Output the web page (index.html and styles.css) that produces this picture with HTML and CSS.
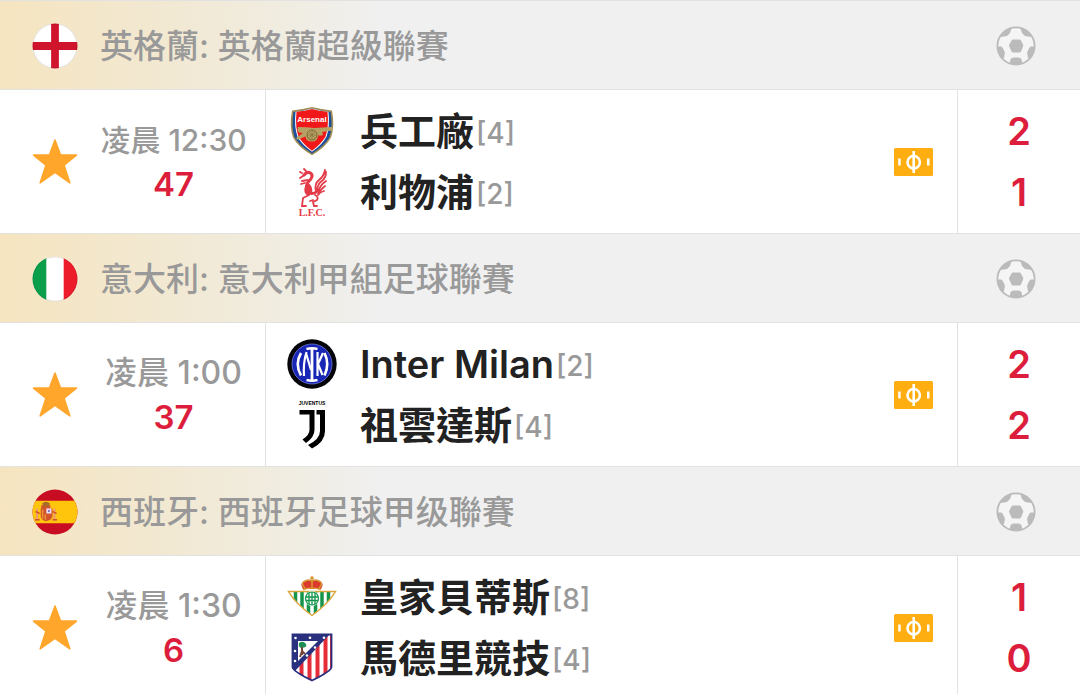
FILE: index.html
```
<!DOCTYPE html>
<html lang="zh-Hant">
<head>
  <meta charset="UTF-8">
  <meta name="viewport" content="width=device-width, initial-scale=1.0">
  <title>足球比分</title>
  <link rel="stylesheet" href="styles.css">
</head>
<body>

  <!-- Shared icons -->
  <svg class="sprite" aria-hidden="true">
    <defs>
      <clipPath id="round"><circle cx="22.5" cy="22.5" r="22"/></clipPath>
      <clipPath id="ball-clip"><circle cx="20" cy="20" r="19"/></clipPath>
      <symbol id="ball" viewBox="0 0 40 40">
        <circle cx="20" cy="20" r="18.6" fill="#f5f5f5"/>
        <g fill="#bbb" clip-path="url(#ball-clip)">
          <path d="M17 13.500h6.500q1 0 1.500 1l2 4q.5 1 0 2l-2 5q-.5 1-1.500 1H17q-1 0-1.500-1l-2.200-5q-.5-1 0-2l2.200-4q.5-1 1.500-1z"/>
          <path d="M3 10L12 0l4 1-2 6-3 3-6.500 1z"/>
          <path d="M37 10L28 0l-4 1 2 6 3 3 6.500 1z"/>
          <path d="M0 20.500h5q1 0 1.500 1l2 4q.5 1 .3 2L8 32l-4 2z"/>
          <path d="M40 20.500h-5q-1 0-1.500 1l-2 4q-.5 1-.3 2L32 32l4 2z"/>
          <path d="M13 40l1.500-6.500q1-2 3-2h5q2 0 3 2L27 40z"/>
        </g>
        <circle cx="20" cy="20" r="18.600" fill="none" stroke="#bbb" stroke-width="1.800"/>
      </symbol>
      <symbol id="star" viewBox="0 0 46 46">
        <path d="M23 1l5.600 14.900 15.900.2-12.400 10.100 5.800 17.700L23 33.500 8.100 43.900l5.800-17.700L1.500 16.100l15.900-.2z" fill="#ffa62b" stroke="#ffa62b" stroke-width="1.500" stroke-linejoin="round"/>
      </symbol>
      <symbol id="pitch" viewBox="0 0 39 28">
        <rect width="39" height="28" rx="1.500" fill="#ffae12"/>
        <rect x="4.200" y="10.500" width="2.500" height="7" fill="#fff"/>
        <rect x="33" y="10.500" width="2.500" height="7" fill="#fff"/>
        <circle cx="19.700" cy="14.200" r="6.200" fill="none" stroke="#fff" stroke-width="2.600"/>
        <path d="M19.700 3v22" stroke="#fff" stroke-width="2.600"/>
      </symbol>
    </defs>
  </svg>

  <section class="league">
    <header class="league-header">
      <svg class="flag" viewBox="0 0 45 45" role="img" aria-label="英格蘭">
        <g clip-path="url(#round)">
          <rect width="45" height="45" fill="#fff"/>
          <path d="M22.500 0v45M0 22.500h45" stroke="#d0142c" stroke-width="7.600"/>
        </g>
        <circle cx="22.500" cy="22.500" r="21.500" fill="none" stroke="#000" stroke-opacity=".1"/>
      </svg>
      <h2>英格蘭: 英格蘭超級聯賽</h2>
      <svg class="ball"><use href="#ball"/></svg>
    </header>
    <div class="match">
      <div class="status">
        <button class="star" aria-label="收藏"><svg><use href="#star"/></svg></button>
        <div class="clock">
          <span class="time time-long">凌晨 12:30</span>
          <span class="minute">47</span>
        </div>
      </div>
      <div class="teams">
        <div class="team-list">
          <div class="team">
            <svg class="crest" viewBox="0 0 50 50" role="img" aria-label="Arsenal">
              <path d="M5 4.500Q15 3.500 25 1q10 2.500 20 3.500 3 16-1 27Q39 41 25 49.300 11 41 6 31.500 2 20.500 5 4.500z" fill="#a08c55"/>
              <path d="M6.500 6Q16 5 25 2.600 34 5 43.500 6q2.500 15-1 25Q38 39.500 25 47.500 12 39.500 7.500 31 4 21 6.500 6z" fill="#1c4f9c"/>
              <path d="M8.500 5.800Q17 5 25 2.600 33 5 41.500 5.800q1.500 15-2 25Q35 39 25 45.800 15 39 10.500 30.800 7 20.800 8.500 5.800z" fill="#fff"/>
              <path d="M9.500 5.700Q18 5 25 3q7 2 15.500 2.700 1.500 15-2 25Q34 38 25 44.800 16 38 11.500 30.700 8 20.700 9.500 5.700z" fill="#f01818"/>
              <path d="M11 21q9 0 16 1l18-1v3.500L35 26q1.500 1.500.5 3.500H31q0 6-6 6t-6.500-5q-3 .5-7.500 3.500l-2-2 7-5q-5 0-5.500-2.500z" fill="#b7a265"/>
              <circle cx="25" cy="29" r="5" fill="none" stroke="#7d6431" stroke-width="1"/>
              <path d="M20 29h10M25 24v10M21.500 25.500l7 7M28.500 25.500l-7 7" stroke="#8b7340" stroke-width=".8"/>
              <text class="arsenal-text" x="25" y="16">Arsenal</text>
            </svg>
            <span class="name">兵工廠</span><span class="rank">[4]</span>
          </div>
          <div class="team">
            <svg class="crest" viewBox="0 0 50 50" role="img" aria-label="Liverpool">
              <g fill="none" stroke="#e43b48" stroke-linecap="round">
                <path d="M17 8q3-4 6.500-2 3 2.500 0 6.500-4.500 4-4 8t5 6q5 0 6-4" stroke-width="3"/>
                <path d="M22 18q3 3 2 8l-3 2q-4-3-2-9z" fill="#e43b48" stroke-width="2"/>
                <path d="M29 24q-2-7 3-11 5-4 6-10M30 24q0-7 6-11 3-3 3-8M31 25q2-7 8-11M31 27q3-5 7-8M31 28q2-3 6-4" stroke-width="1.800"/>
                <path d="M16 9l-3 2M15 6l-2-1M19 4l-2-2M15 14l6-1M14 17l4-1M28 28q4 2 2 5l-4 2 1 4h3M22 28l-6 3-1 8h4M26 33l-3 1" stroke-width="1.800"/>
              </g>
              <text class="lfc-text" x="25" y="49">L.F.C.</text>
            </svg>
            <span class="name">利物浦</span><span class="rank">[2]</span>
          </div>
        </div>
        <svg class="pitch"><use href="#pitch"/></svg>
      </div>
      <div class="scores">
        <span>2</span>
        <span>1</span>
      </div>
    </div>
  </section>

  <section class="league">
    <header class="league-header">
      <svg class="flag" viewBox="0 0 45 45" role="img" aria-label="意大利">
        <g clip-path="url(#round)">
          <rect width="45" height="45" fill="#fff"/>
          <rect width="14" height="45" fill="#0b9f4c"/>
          <rect x="31" width="14" height="45" fill="#ed1c2b"/>
        </g>
        <circle cx="22.500" cy="22.500" r="21.500" fill="none" stroke="#000" stroke-opacity=".1"/>
      </svg>
      <h2>意大利: 意大利甲組足球聯賽</h2>
      <svg class="ball"><use href="#ball"/></svg>
    </header>
    <div class="match">
      <div class="status">
        <button class="star" aria-label="收藏"><svg><use href="#star"/></svg></button>
        <div class="clock">
          <span class="time">凌晨 1:00</span>
          <span class="minute">37</span>
        </div>
      </div>
      <div class="teams">
        <div class="team-list">
          <div class="team">
            <svg class="crest" viewBox="0 0 50 50" role="img" aria-label="Inter Milan">
              <circle cx="25" cy="25" r="24.700" fill="#050509"/>
              <circle cx="25" cy="25" r="20" fill="#1726b4"/>
              <circle cx="25" cy="25" r="20" fill="none" stroke="#6d78d6" stroke-width=".8"/>
              <g fill="none" stroke="#fff">
                <path d="M25 10v31" stroke-width="2.800"/>
                <path d="M19.500 10q5.500-1.500 11 0M19.500 41q5.500 1.500 11 0" stroke-width="2.600"/>
                <path d="M19.500 13q-3.500 11-2.500 24M19 14l5 17M30.500 13v24M36 14l-5 11 4.500 11" stroke-width="2.200"/>
                <path d="M14 14q-6.500 11 0 22.500M37.500 14q5.500 11 0 22.500" stroke-width="2.600"/>
              </g>
            </svg>
            <span class="name">Inter Milan</span><span class="rank">[2]</span>
          </div>
          <div class="team">
            <svg class="crest" viewBox="0 0 50 50" role="img" aria-label="Juventus">
              <text class="juve-text" x="25" y="5">JUVENTUS</text>
              <path d="M12.500 10h15v20q0 7-8.500 13l-3.500-3.500q7-4.500 7-9.500V14.500h-10z"/>
              <path d="M29.500 10H38v21q0 11-13 17.500l-4-3.500q12-6 12-14V14.500h-3.500z"/>
            </svg>
            <span class="name">祖雲達斯</span><span class="rank">[4]</span>
          </div>
        </div>
        <svg class="pitch"><use href="#pitch"/></svg>
      </div>
      <div class="scores">
        <span>2</span>
        <span>2</span>
      </div>
    </div>
  </section>

  <section class="league">
    <header class="league-header">
      <svg class="flag" viewBox="0 0 45 45" role="img" aria-label="西班牙">
        <g clip-path="url(#round)">
          <rect width="45" height="45" fill="#c80d22"/>
          <rect y="11.500" width="45" height="22" fill="#ffc40c"/>
          <path d="M9 16h9v3h2v8q-1 4-6.500 4.500Q9 30.500 8.500 27v-8h.5z" fill="#d2542c"/>
          <path d="M10 14q3.500-3 7.500 0l-1 3h-5.500z" fill="#a86a2a"/>
          <path d="M5 19v12M22 19v12" stroke="#ef9a75" stroke-width="2"/>
          <path d="M3.500 22l4 2M20 22l4 2M3 30h4.500M20 30h4.500" stroke="#d2542c" stroke-width="1.500"/>
          <rect x="14" y="19" width="5" height="5" fill="#eadcf4"/>
          <circle cx="16.500" cy="21.500" r="1" fill="#7355b5"/>
          <path d="M10.500 20v9M13 25v5" stroke="#f5ac38" stroke-width="1"/>
        </g>
      </svg>
      <h2>西班牙: 西班牙足球甲级聯賽</h2>
      <svg class="ball"><use href="#ball"/></svg>
    </header>
    <div class="match">
      <div class="status">
        <button class="star" aria-label="收藏"><svg><use href="#star"/></svg></button>
        <div class="clock">
          <span class="time">凌晨 1:30</span>
          <span class="minute">6</span>
        </div>
      </div>
      <div class="teams">
        <div class="team-list">
          <div class="team">
            <svg class="crest" viewBox="0 0 50 50" role="img" aria-label="Real Betis">
              <clipPath id="betis"><path d="M1.500 19.500h47Q42 31 25 43.500 8 31 1.500 19.500z"/></clipPath>
              <g clip-path="url(#betis)">
                <rect width="50" height="50" fill="#fff"/>
                <path d="M8.500 18v26M15 18v26M21.500 18v26M28.500 18v26M35 18v26M41.500 18v26" stroke="#13964b" stroke-width="3.500"/>
              </g>
              <path d="M1.500 19.500h47Q42 31 25 43.500 8 31 1.500 19.500z" fill="none" stroke="#d9a53a" stroke-width="1.500"/>
              <circle cx="25" cy="26.500" r="7.500" fill="#fff"/>
              <path d="M22 21v11M25 20v13M28 21v11M19 25h12M19 28.500h12" stroke="#13964b" stroke-width="1.300"/>
              <circle cx="25" cy="26.500" r="6.500" fill="none" stroke="#13964b" stroke-width="1.200"/>
              <path d="M16 17q-4-6 2-8 3-1.500 7 0 4-1.500 7 0 6 2 2 8z" fill="#dc3a2c"/>
              <path d="M16 17.500q9-3 18 0M18 16q-5-5 0-7 4-2 7 0v7M32 16q5-5 0-7-4-2-7 0M25 9V4M23 6h4" fill="none" stroke="#d79a35" stroke-width="1.500"/>
            </svg>
            <span class="name">皇家貝蒂斯</span><span class="rank">[8]</span>
          </div>
          <div class="team">
            <svg class="crest" viewBox="0 0 50 50" role="img" aria-label="Atletico Madrid">
              <clipPath id="atleti"><path d="M5 1h40v33q0 4-20 14Q5 38 5 34z"/></clipPath>
              <g clip-path="url(#atleti)">
                <rect width="50" height="50" fill="#fff"/>
                <path d="M14.500 0v50M22.500 0v50M30.500 0v50M38.500 0v50M45 0v50" stroke="#e42d38" stroke-width="4"/>
                <path d="M4 0h40L8 38H4z" fill="#29317f"/>
                <path d="M11 8h20L11 28z" fill="#fff"/>
              </g>
              <path d="M5.500 1.500h39V34q0 4-19.500 13.500Q5.500 38 5.500 34z" fill="none" stroke="#29317f" stroke-width="1.800"/>
              <g fill="#fff">
                <circle cx="8.500" cy="5" r="1.300"/><circle cx="23" cy="4.700" r="1.300"/>
                <circle cx="37" cy="4.700" r="1.300"/><circle cx="28" cy="14.500" r="1.300"/>
                <circle cx="20" cy="22.500" r="1.300"/><circle cx="8" cy="18" r="1.300"/><circle cx="8" cy="28" r="1.300"/>
              </g>
              <path d="M12 10q4-3 7 1 1 3-2 3.500L14 15q-3-1-2-5z" fill="#1e8f55"/>
              <path d="M15 14v8M13 24l2-6 3 3" fill="none" stroke="#774538" stroke-width="2"/>
            </svg>
            <span class="name">馬德里競技</span><span class="rank">[4]</span>
          </div>
        </div>
        <svg class="pitch"><use href="#pitch"/></svg>
      </div>
      <div class="scores">
        <span>1</span>
        <span>0</span>
      </div>
    </div>
  </section>

</body>
</html>
```
FILE: styles.css
```
* {
  box-sizing: border-box;
}

body {
  margin: 0;
  height: 100vh;
  overflow: hidden;
  background: white;
  font-family: Inter, "Noto Sans CJK TC", sans-serif;
  font-weight: 500;
  color: #222;
}

svg {
  display: block;
}

.sprite {
  position: absolute;
  width: 0;
  height: 0;
}

/* League header */
.league-header {
  display: flex;
  align-items: center;
  height: 90px;
  padding: 2px 44px 0 32px;
  border-top: 1px solid #e2e2e2;
  border-bottom: 1px solid #e2e2e2;
  background: linear-gradient(to right, #f5e4bf, #f0ece0 280px, #f0f0f0 380px);
}

.flag {
  width: 46px;
  height: 46px;
}

.league-header h2 {
  flex: 1;
  margin: 0 0 0 22px;
  font-size: 33px;
  line-height: 48px;
  font-weight: 500;
  color: #999;
}

.ball {
  width: 40px;
  height: 40px;
}

/* Match row */
.match {
  display: grid;
  grid-template-columns: 266px 1fr 123px;
  min-height: 143px;
}

.status {
  display: flex;
  align-items: center;
  padding-left: 32px;
  border-right: 1px solid #e2e2e2;
}

.star {
  padding: 0;
  border: none;
  background: none;
  cursor: pointer;
}

.star svg {
  width: 46px;
  height: 46px;
}

.clock {
  flex: 1;
  display: flex;
  flex-direction: column;
  align-items: center;
  padding-left: 4px;
  white-space: nowrap;
}

.time {
  font-size: 32px;
  line-height: 44px;
  color: #999;
}

.time-long {
  font-size: 30px;
}

.minute {
  font-size: 33px;
  line-height: 44px;
  font-weight: 600;
  color: #dc1e3c;
}

.teams {
  display: flex;
  align-items: center;
  justify-content: space-between;
  padding: 0 24px 0 21px;
}

.team {
  display: flex;
  align-items: center;
  height: 61px;
}

.crest {
  width: 50px;
  height: 50px;
  margin-right: 23px;
}

.name {
  font-size: 38px;
  line-height: 56px;
  font-weight: 600;
}

.rank {
  padding-top: 4px;
  padding-left: 2px;
  font-size: 28px;
  color: #999;
}

.pitch {
  width: 39px;
  height: 28px;
}

.scores {
  display: flex;
  flex-direction: column;
  align-items: center;
  justify-content: center;
  border-left: 1px solid #e2e2e2;
  font-size: 38px;
  line-height: 61px;
  font-weight: 600;
  color: #dc1e3c;
}

/* Crest lettering */
.arsenal-text {
  font: bold 8px "Liberation Sans", sans-serif;
  text-anchor: middle;
  fill: white;
}

.lfc-text {
  font: bold 10px "Liberation Serif", serif;
  text-anchor: middle;
  fill: #e43b48;
}

.juve-text {
  font: bold 5px "Liberation Sans", sans-serif;
  text-anchor: middle;
}
```
